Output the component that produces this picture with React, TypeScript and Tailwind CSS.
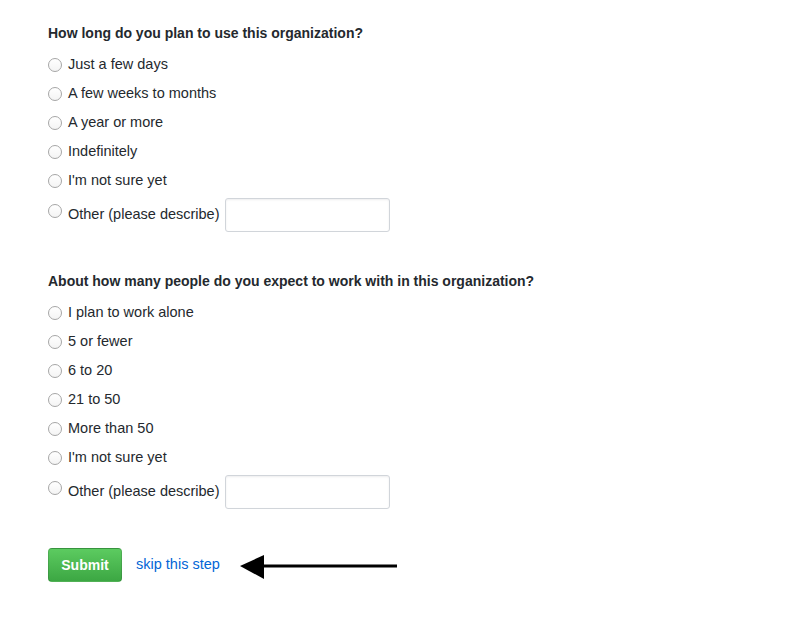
const FONT = "font-['Liberation_Sans',Arial,sans-serif]";

function Radio({ lift = false }: { lift?: boolean }) {
  return (
    <span
      className={`inline-block h-[14px] w-[14px] shrink-0 rounded-full border border-[#a6a6a6] bg-gradient-to-b from-white to-[#f4f4f4] ${
        lift ? "-mt-2" : ""
      }`}
    />
  );
}

function Question({ title, options }: { title: string; options: string[] }) {
  return (
    <div className="flex flex-col">
      <h2 className="text-[14px] font-bold leading-5 text-[#24292e]">{title}</h2>
      <div className="mt-3 flex flex-col gap-[9px]">
        {options.map((option) => (
          <label key={option} className="flex h-5 items-center gap-[6px] text-[14.5px] text-[#24292e]">
            <Radio />
            <span>{option}</span>
          </label>
        ))}
      </div>
      <div className="mt-[7px] flex items-center">
        <label className="flex items-center gap-[6px] text-[14.5px] text-[#24292e]">
          <Radio lift />
          <span>Other (please describe)</span>
        </label>
        <input
          type="text"
          aria-label="Other"
          className="ml-[5px] h-[34px] w-[165px] rounded-[3px] border border-[#d1d5da] bg-white px-2 shadow-[inset_0_1px_2px_rgba(27,31,35,0.075)] outline-none"
        />
      </div>
    </div>
  );
}

export default function App() {
  return (
    <div className={`min-h-[626px] bg-white pl-12 pt-[23px] ${FONT}`}>
      <Question
        title="How long do you plan to use this organization?"
        options={["Just a few days", "A few weeks to months", "A year or more", "Indefinitely", "I'm not sure yet"]}
      />
      <div className="mt-[39px]">
        <Question
          title="About how many people do you expect to work with in this organization?"
          options={["I plan to work alone", "5 or fewer", "6 to 20", "21 to 50", "More than 50", "I'm not sure yet"]}
        />
      </div>
      <div className="mt-[39px] flex items-center">
        <button
          type="button"
          className="h-[34px] w-[74px] rounded-[4px] border border-[rgba(27,31,35,0.15)] bg-gradient-to-b from-[#5ccb60] to-[#3ca743] text-[14px] font-bold text-white"
        >
          Submit
        </button>
        <a href="#" className="ml-[14px] text-[14.5px] text-[#0366d6]">
          skip this step
        </a>
        <svg width="158" height="30" viewBox="0 0 158 30" className="ml-[20px] mt-1">
          <polygon points="0,14 24,3 24,27" fill="#000" />
          <rect x="22" y="12.5" width="135" height="3" fill="#000" />
        </svg>
      </div>
    </div>
  );
}
